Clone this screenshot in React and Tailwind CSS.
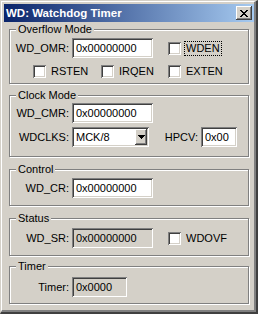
import React from 'react';

const sunken =
  'shadow-[inset_1px_1px_0_#808080,inset_-1px_-1px_0_#ffffff,inset_2px_2px_0_#404040,inset_-2px_-2px_0_#d4d0c8]';
const raised =
  'shadow-[inset_-1px_-1px_0_#404040,inset_1px_1px_0_#ffffff,inset_-2px_-2px_0_#808080]';

// etched group box with caption sitting on the top edge
const Group = ({ title, className, children }) => (
  <div
    className={`ml-[5px] w-[240px] border border-[#808080] shadow-[inset_1px_1px_0_#ffffff,1px_1px_0_#ffffff] ${className}`}
  >
    <div className="-mt-[7px] ml-[6px] w-fit bg-[#d4d0c8] px-[2px] leading-[13px]">{title}</div>
    {children}
  </div>
);

const Field = ({ value, width, readOnly }) => (
  <div
    className={`flex h-[20px] items-center pl-[4px] leading-[13px] ${sunken} ${width} ${
      readOnly ? 'bg-[#d4d0c8]' : 'bg-white'
    }`}
  >
    {value}
  </div>
);

const Check = ({ label, focused }) => (
  <div className="flex items-center">
    <div className={`h-[13px] w-[13px] bg-white ${sunken}`} />
    {focused ? (
      <span className="ml-[3px] border border-dotted border-black px-[1px] leading-[13px]">{label}</span>
    ) : (
      <span className="ml-[5px] leading-[13px]">{label}</span>
    )}
  </div>
);

const Label = ({ children }) => (
  <div className="w-[59px] text-right leading-[13px]">{children}</div>
);

export default function App() {
  return (
    <div className="h-[314px] w-[258px] border-t border-l border-r-2 border-b-2 border-t-[#d4d0c8] border-l-[#d4d0c8] border-r-[#404040] border-b-[#404040] bg-[#d4d0c8] font-['Liberation_Sans',Arial,sans-serif] text-[11px] text-black">
      <div className="h-full border-t border-l border-r-2 border-b-2 border-t-white border-l-white border-r-[#808080] border-b-[#808080] pt-[2px] pl-[2px]">
        {/* title bar */}
        <div className="flex h-[18px] items-center justify-between bg-[linear-gradient(to_right,#0a246a,#a6caf0)] pl-[2px] pr-[2px]">
          <span className="text-[11.5px] font-bold leading-[14px] text-white">WD: Watchdog Timer</span>
          <div className={`flex h-[14px] w-[16px] items-center justify-center bg-[#d4d0c8] ${raised}`}>
            <svg width="8" height="7" viewBox="0 0 8 7" shapeRendering="crispEdges">
              <path
                d="M0 0h2v1h-2zM6 0h2v1h-2zM1 1h2v1h-2zM5 1h2v1h-2zM2 2h4v1h-4zM3 3h2v1h-2zM2 4h4v1h-4zM1 5h2v1h-2zM5 5h2v1h-2zM0 6h2v1h-2zM6 6h2v1h-2z"
                fill="#000"
              />
            </svg>
          </div>
        </div>

        <Group title="Overflow Mode" className="mt-[7px] pb-[5px]">
          <div className="mt-[2px] flex items-center">
            <Label>WD_OMR:</Label>
            <div className="ml-[3px]">
              <Field value="0x00000000" width="w-[81px]" />
            </div>
            <div className="ml-[15px]">
              <Check label="WDEN" focused />
            </div>
          </div>
          <div className="mt-[7px] flex h-[13px] items-center pl-[23px]">
            <div className="w-[68px]">
              <Check label="RSTEN" />
            </div>
            <div className="w-[67px]">
              <Check label="IRQEN" />
            </div>
            <Check label="EXTEN" />
          </div>
        </Group>

        <Group title="Clock Mode" className="mt-[11px] pb-[9px]">
          <div className="mt-[1px] flex items-center">
            <Label>WD_CMR:</Label>
            <div className="ml-[3px]">
              <Field value="0x00000000" width="w-[81px]" />
            </div>
          </div>
          <div className="mt-[4px] flex items-center">
            <Label>WDCLKS:</Label>
            <div className={`ml-[3px] flex h-[20px] w-[77px] items-center bg-white p-[2px] ${sunken}`}>
              <span className="flex-1 pl-[2px] leading-[13px]">MCK/8</span>
              <div className={`flex h-[16px] w-[12px] items-center justify-center bg-[#d4d0c8] ${raised}`}>
                <svg width="7" height="4" viewBox="0 0 7 4" shapeRendering="crispEdges">
                  <path d="M0 0h7v1h-7zM1 1h5v1h-5zM2 2h3v1h-3zM3 3h1v1h-1z" fill="#000" />
                </svg>
              </div>
            </div>
            <div className="ml-[9px] w-[40px] text-right leading-[13px]">HPCV:</div>
            <div className="ml-[3px]">
              <Field value="0x00" width="w-[36px]" />
            </div>
          </div>
        </Group>

        <Group title="Control" className="mt-[12px] pb-[7px]">
          <div className="mt-[2px] flex items-center">
            <Label>WD_CR:</Label>
            <div className="ml-[3px]">
              <Field value="0x00000000" width="w-[81px]" />
            </div>
          </div>
        </Group>

        <Group title="Status" className="mt-[12px] pb-[7px]">
          <div className="mt-[3px] flex items-center">
            <Label>WD_SR:</Label>
            <div className="ml-[3px]">
              <Field value="0x00000000" width="w-[81px]" readOnly />
            </div>
            <div className="ml-[15px]">
              <Check label="WDOVF" />
            </div>
          </div>
        </Group>

        <Group title="Timer" className="mt-[10px] pb-[6px]">
          <div className="mt-[4px] flex items-center">
            <Label>Timer:</Label>
            <div className="ml-[3px]">
              <Field value="0x0000" width="w-[55px]" readOnly />
            </div>
          </div>
        </Group>
      </div>
    </div>
  );
}
